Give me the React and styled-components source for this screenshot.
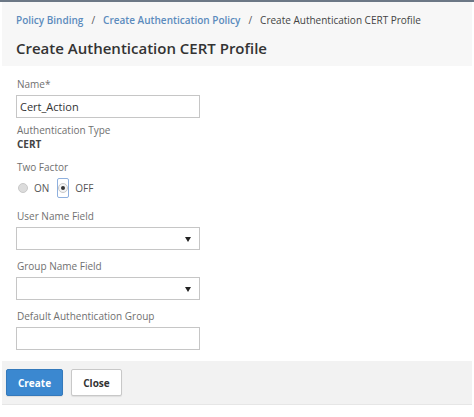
import React from "react";
import styled, { createGlobalStyle } from "styled-components";

const Global = createGlobalStyle`
  html, body { margin: 0; padding: 0; background: #fff; }
  body { font-family: "Open Sans", "Noto Sans", sans-serif; color: #333; }
  * { box-sizing: border-box; }
`;

const Page = styled.div`
  width: 474px;
  height: 417px;
  background: #fff;
  border-top: 2px solid #6c7886;
  display: flex;
  flex-direction: column;
  padding: 0 2px;
`;

const Header = styled.div`
  background: #f7f7f7;
  height: 64px;
  padding: 11px 14px 0;
  display: flex;
  flex-direction: column;
  gap: 8px;
`;

const Crumbs = styled.div`
  display: flex;
  align-items: center;
  white-space: nowrap;
  font-size: 10px;
  line-height: 15px;
  color: #444;
`;

const CrumbLink = styled.span`
  color: #5b8bbd;
  font-weight: 600;
`;

const Sep = styled.span`
  color: #555;
  margin: 0 8px;
`;

const Title = styled.h1`
  margin: 0;
  font-size: 15px;
  font-weight: 600;
  line-height: 24px;
  color: #333;
  white-space: nowrap;
`;

const Body = styled.div`
  flex: 0 0 auto;
  height: 295px;
  padding: 11px 15px 0;
  display: flex;
  flex-direction: column;
`;

const Label = styled.div`
  font-size: 10px;
  line-height: 15px;
  color: #707070;
  margin-top: ${(p) => p.$mt || 0}px;
  margin-bottom: ${(p) => (p.$mb === undefined ? 3 : p.$mb)}px;
`;

const Value = styled.div`
  font-size: 10px;
  font-weight: 700;
  line-height: 13px;
  color: #444;
`;

const Input = styled.div`
  width: 184px;
  height: 23px;
  margin-left: -1px;
  border: 1px solid #c6c6c6;
  background: #fff;
  font-size: 11px;
  line-height: 21px;
  padding: 0 3px;
  color: #333;
  display: flex;
  align-items: center;
  justify-content: space-between;
`;

const Caret = styled.span`
  width: 0;
  height: 0;
  border-left: 3px solid transparent;
  border-right: 3px solid transparent;
  border-top: 5px solid #222;
  margin-right: 5px;
  margin-top: 2px;
`;

const RadioRow = styled.div`
  display: flex;
  align-items: center;
  height: 20px;
  font-size: 10px;
  color: #555;
`;

const RadioWrap = styled.span`
  display: inline-flex;
  align-items: center;
  justify-content: center;
  width: 12px;
  height: 20px;
  border: 1px solid ${(p) => (p.$focus ? "#8fb0de" : "transparent")};
  border-radius: 2px;
  margin-right: ${(p) => (p.$focus ? 6 : 5)}px;
  margin-left: ${(p) => p.$ml || 0}px;
`;

const Radio = styled.span`
  width: 10px;
  height: 10px;
  border-radius: 50%;
  background: ${(p) => (p.$on ? "#f4f4f4" : "#dcdcdc")};
  border: 1px solid #c9c9c9;
  display: flex;
  align-items: center;
  justify-content: center;
  &::after {
    content: "";
    display: ${(p) => (p.$on ? "block" : "none")};
    width: 4px;
    height: 4px;
    border-radius: 50%;
    background: #333;
  }
`;

const Footer = styled.div`
  background: #f2f2f2;
  height: 44px;
  padding: 0 4px;
  display: flex;
  align-items: center;
  gap: 8px;
  border-bottom: 1px solid #e6e6e6;
`;

const Button = styled.button`
  height: 27px;
  padding: 0;
  width: ${(p) => p.$w}px;
  font-family: inherit;
  font-size: 10px;
  font-weight: 700;
  border-radius: 2px;
  cursor: pointer;
  color: ${(p) => (p.$primary ? "#fff" : "#333")};
  background: ${(p) => (p.$primary ? "#3b88d0" : "#fff")};
  border: 1px solid ${(p) => (p.$primary ? "#3479bb" : "#c8c8c8")};
  box-shadow: 0 1px 1px rgba(0, 0, 0, 0.08);
`;

export default function App() {
  return (
    <>
      <Global />
      <Page>
        <Header>
          <Crumbs>
            <CrumbLink>Policy Binding</CrumbLink>
            <Sep>/</Sep>
            <CrumbLink>Create Authentication Policy</CrumbLink>
            <Sep>/</Sep>
            <span>Create Authentication CERT Profile</span>
          </Crumbs>
          <Title>Create Authentication CERT Profile</Title>
        </Header>
        <Body>
          <Label>Name*</Label>
          <Input>Cert_Action</Input>
          <Label $mt={5} $mb={0}>Authentication Type</Label>
          <Value>CERT</Value>
          <Label $mt={9}>Two Factor</Label>
          <RadioRow>
            <RadioWrap>
              <Radio />
            </RadioWrap>
            ON
            <RadioWrap $focus $ml={8}>
              <Radio $on />
            </RadioWrap>
            OFF
          </RadioRow>
          <Label $mt={11}>User Name Field</Label>
          <Input>
            <span />
            <Caret />
          </Input>
          <Label $mt={9}>Group Name Field</Label>
          <Input>
            <span />
            <Caret />
          </Input>
          <Label $mt={9}>Default Authentication Group</Label>
          <Input />
        </Body>
        <Footer>
          <Button $primary $w={57}>Create</Button>
          <Button $w={51}>Close</Button>
        </Footer>
      </Page>
    </>
  );
}
